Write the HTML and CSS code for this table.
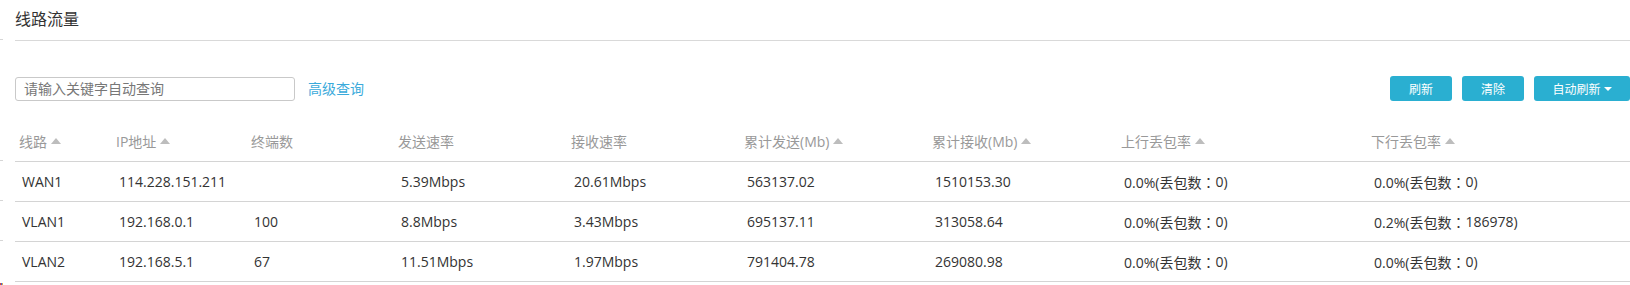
FILE: index.html
```html
<!DOCTYPE html>
<html lang="zh-CN">
<head>
<meta charset="utf-8">
<title>线路流量</title>
<link rel="stylesheet" href="styles.css">
</head>
<body>
<div class="page">
  <div class="gutter">
    <div class="stub s1"></div>
    <div class="stub s2"></div>
    <div class="stub s3"></div>
    <div class="stub s3"></div>
    <div class="dots"></div>
  </div>
  <div class="main">
    <div class="title-bar">线路流量</div>
    <div class="toolbar">
      <div class="search">
        <input class="search-input" type="text" placeholder="请输入关键字自动查询">
        <a class="adv-link">高级查询</a>
      </div>
      <div class="actions">
        <button class="btn btn-sm">刷新</button>
        <button class="btn btn-sm">清除</button>
        <button class="btn btn-lg">自动刷新<span class="caret"></span></button>
      </div>
    </div>
    <div class="grid">
      <div class="row head">
        <div class="cell">线路<span class="sort"></span></div>
        <div class="cell">IP地址<span class="sort"></span></div>
        <div class="cell">终端数</div>
        <div class="cell">发送速率</div>
        <div class="cell">接收速率</div>
        <div class="cell">累计发送(Mb)<span class="sort"></span></div>
        <div class="cell">累计接收(Mb)<span class="sort"></span></div>
        <div class="cell">上行丢包率<span class="sort"></span></div>
        <div class="cell">下行丢包率<span class="sort"></span></div>
      </div>
      <div class="row">
        <div class="cell">WAN1</div>
        <div class="cell">114.228.151.211</div>
        <div class="cell"></div>
        <div class="cell">5.39Mbps</div>
        <div class="cell">20.61Mbps</div>
        <div class="cell">563137.02</div>
        <div class="cell">1510153.30</div>
        <div class="cell">0.0%(丢包数<span class="colon">：</span>0)</div>
        <div class="cell">0.0%(丢包数<span class="colon">：</span>0)</div>
      </div>
      <div class="row">
        <div class="cell">VLAN1</div>
        <div class="cell">192.168.0.1</div>
        <div class="cell">100</div>
        <div class="cell">8.8Mbps</div>
        <div class="cell">3.43Mbps</div>
        <div class="cell">695137.11</div>
        <div class="cell">313058.64</div>
        <div class="cell">0.0%(丢包数<span class="colon">：</span>0)</div>
        <div class="cell">0.2%(丢包数<span class="colon">：</span>186978)</div>
      </div>
      <div class="row">
        <div class="cell">VLAN2</div>
        <div class="cell">192.168.5.1</div>
        <div class="cell">67</div>
        <div class="cell">11.51Mbps</div>
        <div class="cell">1.97Mbps</div>
        <div class="cell">791404.78</div>
        <div class="cell">269080.98</div>
        <div class="cell">0.0%(丢包数<span class="colon">：</span>0)</div>
        <div class="cell">0.0%(丢包数<span class="colon">：</span>0)</div>
      </div>
    </div>
  </div>
</div>
</body>
</html>
```

FILE: styles.css
```css
* { box-sizing: border-box; }
html, body { margin: 0; padding: 0; background: #fff; }
body {
  font-family: "Open Sans", "Noto Sans CJK SC", sans-serif;
  font-size: 14px;
  color: #333;
  width: 1630px;
  height: 285px;
  overflow: hidden;
}
.page { display: flex; gap: 12px; }
.gutter { width: 3px; display: flex; flex-direction: column; flex: none; }
.stub { border-bottom: 1px solid #d6d6d6; flex: none; }
.s1 { height: 40px; }
.s2 { height: 121px; }
.s3 { height: 40px; }
.dots {
  margin-top: 42px;
  height: 2px;
  background: linear-gradient(90deg, #e04040 0 1px, #3a6ad8 1px 2px, #e0b040 2px 3px);
}
.main { flex: 1; display: flex; flex-direction: column; min-width: 0; }
.title-bar {
  height: 41px;
  padding-top: 8px;
  line-height: 22px;
  font-size: 16px;
  color: #333;
  border-bottom: 1px solid #d9d9d9;
}
.toolbar {
  margin-top: 35px;
  height: 25px;
  display: flex;
  align-items: center;
  justify-content: space-between;
}
.search { display: flex; align-items: center; gap: 13px; }
.search-input {
  width: 280px;
  height: 24px;
  margin: 0;
  padding: 0 8px;
  border: 1px solid #c9c9c9;
  border-radius: 3px;
  font: inherit;
  font-size: 14px;
  color: #333;
  outline: none;
}
.search-input::placeholder { color: #777; }
.adv-link { color: #3aaadb; font-size: 14px; line-height: 20px; cursor: pointer; }
.actions { display: flex; gap: 10px; }
.btn {
  height: 25px;
  margin: 0;
  padding: 0;
  border: none;
  border-radius: 3px;
  background: #2aafd1;
  color: #fff;
  font-family: "Open Sans", "Noto Sans CJK SC", sans-serif;
  font-size: 12px;
  display: flex;
  align-items: center;
  justify-content: center;
  gap: 3px;
}
.btn-sm { width: 62px; }
.btn-lg { width: 96px; }
.caret {
  width: 0; height: 0;
  border-left: 4px solid transparent;
  border-right: 4px solid transparent;
  border-top: 4px solid #fff;
  margin-top: 1px;
}
.grid { margin-top: 20px; display: flex; flex-direction: column; }
.row {
  display: grid;
  grid-template-columns: 97px 135px 147px 173px 173px 188px 189px 250px 1fr;
  height: 40px;
  align-items: center;
  border-bottom: 1px solid #d4d4d4;
}
.row.head { height: 41px; color: #999; }
.cell { padding-left: 7px; white-space: nowrap; display: flex; align-items: center; }
.head .cell { padding-left: 4px; }
.colon { font-family: "Noto Sans CJK TC", sans-serif; }
.sort {
  width: 0; height: 0;
  margin-left: 4px;
  border-left: 5.5px solid transparent;
  border-right: 5.5px solid transparent;
  border-bottom: 6px solid #bdbdbd;
}
```
